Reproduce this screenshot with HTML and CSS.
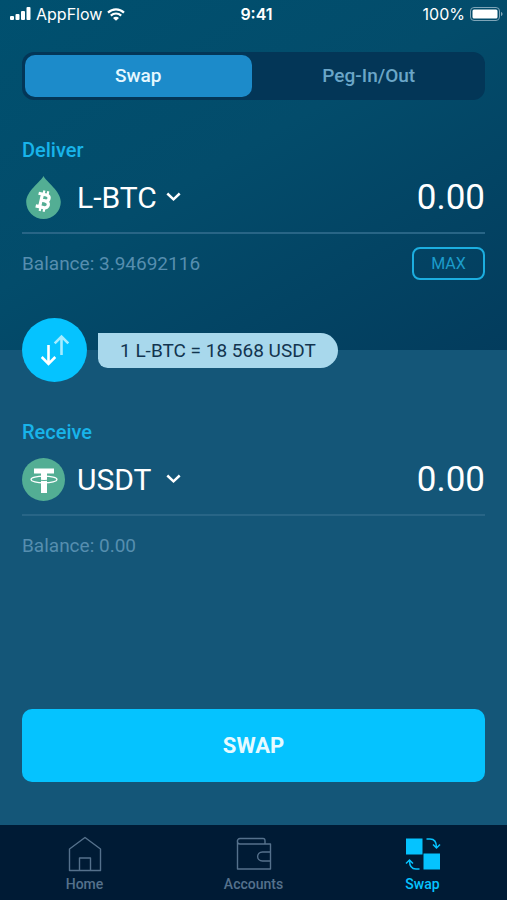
FILE: index.html
```html
<!DOCTYPE html>
<html lang="en">
<head>
    <meta charset="UTF-8">
    <meta name="viewport" content="width=device-width, initial-scale=1.0">
    <title>Swap</title>
    <link rel="stylesheet" href="styles.css">
</head>
<body>
    <div class="app">
        <main class="screen">
            <section class="panel deliver">
                <div class="status-bar">
                    <div class="carrier">
                        <svg width="21" height="14" viewBox="0 0 21 14" fill="#fff">
                            <rect x="0" y="9" width="4" height="4" rx="1"/>
                            <rect x="5.5" y="7" width="4" height="6" rx="1"/>
                            <rect x="11" y="4" width="4" height="9" rx="1"/>
                            <rect x="16.5" y="0" width="4" height="13" rx="1"/>
                        </svg>
                        <span>AppFlow</span>
                        <svg width="18" height="13" viewBox="0 0 18 13" fill="none" stroke="#fff" stroke-width="2.2">
                            <path d="M1 4.6C5.5 0.3 12.5 0.3 17 4.6"/>
                            <path d="M3.8 7.6C6.8 4.8 11.2 4.8 14.2 7.6"/>
                            <path d="M9 12.8L6 9.9C7.7 8.4 10.3 8.4 12 9.9Z" fill="#fff" stroke="none"/>
                        </svg>
                    </div>
                    <div class="time">9:41</div>
                    <div class="battery">
                        <span>100%</span>
                        <svg width="33" height="14" viewBox="0 0 33 14">
                            <rect x="0.5" y="0.5" width="29" height="13" rx="3.5" fill="none" stroke="#7fa5b8"/>
                            <rect x="2.5" y="2.5" width="25" height="9" rx="1.5" fill="#fff"/>
                            <path d="M31 5C33 5.5 33 8.5 31 9Z" fill="#7fa5b8"/>
                        </svg>
                    </div>
                </div>

                <div class="tabs">
                    <button type="button" class="tab active">Swap</button>
                    <button type="button" class="tab">Peg-In/Out</button>
                </div>

                <div class="field">
                    <label class="field-label" for="deliver-amount">Deliver</label>
                    <div class="field-row">
                        <svg class="coin" width="43" height="44" viewBox="0 0 43 44">
                            <path d="M21.5 1C24.5 7 38.8 16 38.8 27A17.3 17 0 0 1 4.2 27C4.2 16 18.5 7 21.5 1Z" fill="#53ae94"/>
                            <g transform="rotate(13 21.5 26)" fill="none" stroke="#fff" stroke-width="3.2">
                                <path d="M19 19V33M15 19.5H23C27.5 19.5 27.5 25.5 23 25.5H19M23 25.5C28.5 25.5 28.5 32.5 23 32.5H15"/>
                                <path d="M20 15.5V19M24 15.5V19M20 33V36.5M24 33V36.5" stroke-width="2.2"/>
                            </g>
                        </svg>
                        <div class="picker">
                            <select class="currency" aria-label="Deliver currency">
                                <option selected>L-BTC</option>
                                <option>USDT</option>
                            </select>
                            <svg class="chevron" width="15" height="10" viewBox="0 0 15 10" fill="none" stroke="#fff" stroke-width="2.5">
                                <path d="M1.3 1.5L7.5 7.3L13.7 1.5"/>
                            </svg>
                        </div>
                        <input class="amount" id="deliver-amount" type="text" inputmode="decimal" value="0.00">
                    </div>
                    <div class="field-info">
                        <span>Balance: 3.94692116</span>
                        <button type="button" class="max">MAX</button>
                    </div>
                </div>

                <div class="rate-row">
                    <button type="button" class="flip" aria-label="Switch currencies">
                        <svg width="30" height="32" viewBox="0 0 30 32" fill="none" stroke-width="2.6">
                            <path d="M8.5 11V29.5M1.7 23L8.5 29.8L15.3 23" stroke="#fff"/>
                            <path d="M21.5 21V3M14.7 9.3L21.5 2.5L28.3 9.3" stroke="#a6ecff"/>
                        </svg>
                    </button>
                    <div class="rate">1 L-BTC = 18 568 USDT</div>
                </div>
            </section>

            <section class="panel receive">
                <div class="field">
                    <label class="field-label" for="receive-amount">Receive</label>
                    <div class="field-row">
                        <svg class="coin" width="43" height="44" viewBox="0 0 43 44">
                            <circle cx="21.5" cy="22.5" r="21.5" fill="#53ae94"/>
                            <path d="M12 11.5H32V16.5H25V36H19V16.5H12Z" fill="#fff"/>
                            <ellipse cx="22" cy="22.5" rx="13" ry="3.3" fill="none" stroke="#fff" stroke-width="1.2"/>
                            <path d="M19 23.3C21 23.6 23 23.6 25 23.3" fill="none" stroke="#53ae94"/>
                        </svg>
                        <div class="picker">
                            <select class="currency" aria-label="Receive currency">
                                <option>L-BTC</option>
                                <option selected>USDT</option>
                            </select>
                            <svg class="chevron" width="15" height="10" viewBox="0 0 15 10" fill="none" stroke="#fff" stroke-width="2.5">
                                <path d="M1.3 1.5L7.5 7.3L13.7 1.5"/>
                            </svg>
                        </div>
                        <input class="amount" id="receive-amount" type="text" inputmode="decimal" value="0.00">
                    </div>
                    <div class="field-info">
                        <span>Balance: 0.00</span>
                    </div>
                </div>

                <button type="button" class="submit">SWAP</button>
            </section>
        </main>

        <nav class="nav">
            <a class="nav-item" href="#home">
                <svg width="34" height="36" viewBox="0 0 34 36" fill="none" stroke="currentColor" stroke-width="1.4" stroke-linejoin="round">
                    <path d="M1.5 13L17 1.5L32.5 13V34.5H1.5Z"/>
                    <path d="M11.5 34.5V22H22.5V34.5"/>
                </svg>
                <span>Home</span>
            </a>
            <a class="nav-item" href="#accounts">
                <svg width="36" height="36" viewBox="0 0 36 36" fill="none" stroke="currentColor" stroke-width="1.4" stroke-linejoin="round">
                    <path d="M29 8V5C29 3.5 28.5 2.5 27 2.5H4C0.5 2.5 0.5 8 4 8H34.5V33H1.5V5"/>
                    <path d="M34.5 16H26.5C20 16 20 25 26.5 25H34.5"/>
                </svg>
                <span>Accounts</span>
            </a>
            <a class="nav-item current" href="#swap">
                <svg width="36" height="36" viewBox="0 0 36 36" fill="none" stroke="currentColor" stroke-width="1.5">
                    <path d="M1 2.5H17.5V18.5H1ZM18.5 17.5H35V33.5H18.5Z" fill="currentColor" stroke="none"/>
                    <path d="M21.5 3H25C29 3 31.5 5.5 31.5 11.5M28 8.5L31.5 12L35 8.5"/>
                    <path d="M14.5 33H11C7 33 4.5 30.5 4.5 24.5M1 27.5L4.5 24L8 27.5"/>
                </svg>
                <span>Swap</span>
            </a>
        </nav>
    </div>
</body>
</html>
```
FILE: styles.css
```css
* {
    box-sizing: border-box;
}
body {
    margin: 0;
    font-family: Roboto, "Liberation Sans", sans-serif;
    background-color: #145678;
    color: #fff;
}
button, input, select {
    font-family: inherit;
    margin: 0;
    padding: 0;
    border: none;
    cursor: pointer;
}
svg {
    display: block;
    flex-shrink: 0;
}
.app {
    display: flex;
    flex-direction: column;
    min-height: 100vh;
}
.screen {
    flex: 1;
    display: flex;
    flex-direction: column;
}
.panel {
    padding: 0 22px;
}
.deliver {
    background: linear-gradient(150deg, #00506f 0%, #034c6b 45%, #033c5d 100%);
}
.receive {
    flex: 1;
    display: flex;
    flex-direction: column;
    padding-top: 70px;
    padding-bottom: 43px;
    background-color: #145678;
}

/* status bar */
.status-bar {
    display: grid;
    grid-template-columns: 1fr auto 1fr;
    align-items: center;
    height: 28px;
    margin: 0 -18px 0 -12px;
    font-family: Inter, sans-serif;
    font-size: 16px;
}
.carrier, .battery {
    display: flex;
    align-items: center;
    gap: 5px;
}
.battery {
    justify-content: flex-end;
}
.time {
    font-weight: 600;
}

/* tabs */
.tabs {
    display: flex;
    gap: 4px;
    height: 48px;
    margin-top: 24px;
    padding: 3px;
    border-radius: 12px;
    background-color: #033657;
}
.tab {
    flex: 1;
    padding-bottom: 2px;
    border-radius: 10px;
    background: none;
    color: #6ba6c8;
    font-size: 19px;
    font-weight: 500;
}
.tab.active {
    background-color: #1c8bca;
    color: #e6f8ff;
}

/* currency fields */
.deliver .field {
    margin-top: 38px;
}
.field-label {
    display: block;
    line-height: 24px;
    font-size: 20px;
    font-weight: 500;
    color: #18b4ea;
}
.field-row {
    display: flex;
    align-items: center;
    height: 72px;
    border-bottom: 2px solid #286586;
}
.picker {
    display: grid;
    align-items: center;
    width: 104px;
    margin-left: 12px;
}
.currency, .chevron {
    grid-area: 1 / 1;
}
.currency {
    appearance: none;
    width: 100%;
    background: none;
    color: #fff;
    font-size: 30px;
}
.currency option {
    color: #033657;
}
.chevron {
    justify-self: end;
    pointer-events: none;
}
.amount {
    flex: 1;
    min-width: 0;
    background: none;
    color: #fff;
    font-size: 35px;
    text-align: right;
}
.field-info {
    display: flex;
    align-items: center;
    justify-content: space-between;
    height: 33px;
    margin-top: 13px;
    font-size: 19px;
    color: #568eaf;
}
.max {
    width: 73px;
    height: 33px;
    border: 2px solid #1caee0;
    border-radius: 8px;
    background: none;
    color: #1c9ccb;
    font-size: 16px;
}

/* exchange rate, sits half over the next panel */
.rate-row {
    position: relative;
    display: flex;
    align-items: center;
    gap: 11px;
    margin-top: 38px;
    margin-bottom: -32px;
}
.flip {
    display: grid;
    place-items: center;
    width: 65px;
    height: 64px;
    border-radius: 50%;
    background-color: #05c3ff;
}
.rate {
    padding: 0 22px;
    line-height: 35px;
    border-radius: 0 18px 18px 10px;
    background-color: #a8d8ec;
    color: #12344f;
    font-size: 19px;
}

.submit {
    height: 73px;
    margin-top: auto;
    border-radius: 10px;
    background-color: #05c3ff;
    color: #e6faff;
    font-size: 22px;
    font-weight: 700;
}

/* bottom navigation */
.nav {
    display: flex;
    height: 75px;
    padding-top: 11px;
    background-color: #001b35;
}
.nav-item {
    flex: 1;
    display: flex;
    flex-direction: column;
    align-items: center;
    gap: 3px;
    color: #55718c;
    font-size: 14px;
    font-weight: 500;
    line-height: 18px;
    text-decoration: none;
}
.nav-item.current {
    color: #05c3ff;
}
```
